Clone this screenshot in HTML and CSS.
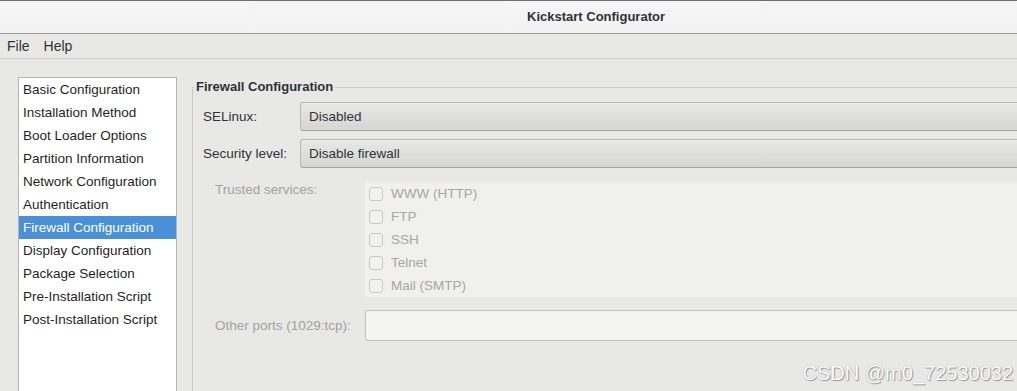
FILE: index.html
```html
<!DOCTYPE html>
<html>
<head>
<meta charset="utf-8">
<title>Kickstart Configurator</title>
<link rel="stylesheet" href="styles.css">
</head>
<body>
<div class="window">
  <header class="titlebar"><span class="title">Kickstart Configurator</span></header>
  <nav class="menubar"><span class="menu">File</span><span class="menu">Help</span></nav>
  <main class="main">
    <ul class="sidebar">
      <li>Basic Configuration</li>
      <li>Installation Method</li>
      <li>Boot Loader Options</li>
      <li>Partition Information</li>
      <li>Network Configuration</li>
      <li>Authentication</li>
      <li class="selected">Firewall Configuration</li>
      <li>Display Configuration</li>
      <li>Package Selection</li>
      <li>Pre-Installation Script</li>
      <li>Post-Installation Script</li>
    </ul>
    <fieldset class="frame">
      <legend class="frame-title">Firewall Configuration</legend>
      <div class="form">
        <div class="row">
          <span class="label">SELinux:</span>
          <div class="combo">Disabled</div>
        </div>
        <div class="row">
          <span class="label">Security level:</span>
          <div class="combo">Disable firewall</div>
        </div>
        <div class="sub">
          <div class="subrow">
            <span class="dlabel top">Trusted services:</span>
            <div class="checks">
              <div class="check"><span class="box"></span><span class="ctext">WWW (HTTP)</span></div>
              <div class="check"><span class="box"></span><span class="ctext">FTP</span></div>
              <div class="check"><span class="box"></span><span class="ctext">SSH</span></div>
              <div class="check"><span class="box"></span><span class="ctext">Telnet</span></div>
              <div class="check"><span class="box"></span><span class="ctext">Mail (SMTP)</span></div>
            </div>
          </div>
          <div class="subrow ports">
            <span class="dlabel">Other ports (1029:tcp):</span>
            <div class="entry"></div>
          </div>
        </div>
      </div>
    </fieldset>
  </main>
  <div class="watermark">CSDN @m0_72530032</div>
</div>
</body>
</html>
```

FILE: styles.css
```css
html, body {
  margin: 0;
  padding: 0;
  overflow: hidden;
}
body {
  width: 1017px;
  height: 391px;
  background: #e8e8e7;
  font-family: "Liberation Sans", Arial, sans-serif;
  font-size: 13.5px;
  color: #2e3436;
}
.window {
  position: relative;
  width: 1017px;
  height: 391px;
  overflow: hidden;
  display: flex;
  flex-direction: column;
}
.titlebar {
  height: 32px;
  border-top: 1px solid #6e6e6e;
  border-bottom: 1px solid #9c9c9c;
  background: linear-gradient(#f5f5f5, #f2f2f2);
  display: flex;
  align-items: center;
  justify-content: center;
  padding-left: 175px;
  flex: none;
}
.title {
  font-weight: bold;
  font-size: 13px;
  color: #2e3436;
  line-height: 16px;
}
.menubar {
  height: 24px;
  border-bottom: 1px solid #d1d1d0;
  display: flex;
  align-items: center;
  padding-left: 0;
  flex: none;
}
.menu {
  padding: 0 7px 0 7px;
  line-height: 16px;
  font-size: 14px;
}
.main {
  flex: 1;
  display: flex;
  align-items: flex-start;
  padding: 18px 0 0 18px;
  min-height: 0;
}
.sidebar {
  list-style: none;
  margin: 0;
  padding: 0;
  width: 157px;
  height: 320px;
  background: #ffffff;
  border: 1px solid #b4b4b1;
  flex: none;
}
.sidebar li {
  height: 23px;
  line-height: 23px;
  padding-left: 4px;
  color: #1f1f1f;
  white-space: nowrap;
}
.sidebar li.selected {
  background: #4a90d9;
  color: #ffffff;
}
.frame {
  flex: 1;
  margin: 2px 0 0 15px;
  padding: 0;
  min-width: 0;
  border: 1px solid #cbcbc9;
  border-right: none;
  border-bottom: none;
  height: 320px;
}
.frame-title {
  font-weight: bold;
  font-size: 13px;
  line-height: 16px;
  padding: 0 2px;
  margin-left: 1px;
  color: #2e3436;
}
.form {
  padding: 7px 0 0 10px;
  margin-right: -10px;
  display: flex;
  flex-direction: column;
  gap: 8px;
}
.row {
  display: grid;
  grid-template-columns: 97px 1fr;
  align-items: center;
}
.label {
  color: #2e3436;
}
.combo {
  height: 27px;
  line-height: 27px;
  padding-left: 8px;
  border: 1px solid #b7b7b4;
  border-bottom-color: #a3a3a1;
  border-radius: 3px;
  background: linear-gradient(#e8e8e7, #d5d5d4);
  box-shadow: inset 0 1px 0 #eeeeed;
  color: #2e3436;
}
.sub {
  margin-top: 6px;
  padding-left: 12px;
  display: flex;
  flex-direction: column;
  gap: 13px;
}
.subrow {
  display: grid;
  grid-template-columns: 150px 1fr;
  align-items: start;
}
.subrow.ports {
  align-items: center;
}
.dlabel {
  color: #a2a3a1;
  line-height: 15px;
}
.checks {
  background: #f0f0ef;
  display: flex;
  flex-direction: column;
}
.check {
  height: 23px;
  display: flex;
  align-items: center;
  padding-left: 4px;
}
.box {
  width: 12px;
  height: 12px;
  border: 1px solid #c9c9c7;
  border-radius: 3px;
  background: #f1f1f0;
  margin-right: 8px;
  flex: none;
}
.ctext {
  color: #a7a7a5;
}
.entry {
  height: 29px;
  border: 1px solid #c2c2c0;
  border-radius: 3px;
  background: #f4f4f3;
}
.watermark {
  position: absolute;
  right: 4px;
  bottom: 7px;
  font-size: 20px;
  line-height: 22px;
  color: #ffffff;
  text-shadow: 0 0 1px #8c8c8c, 1px 1px 1px #9a9a9a;
  font-family: "Liberation Sans", Arial, sans-serif;
}
```
